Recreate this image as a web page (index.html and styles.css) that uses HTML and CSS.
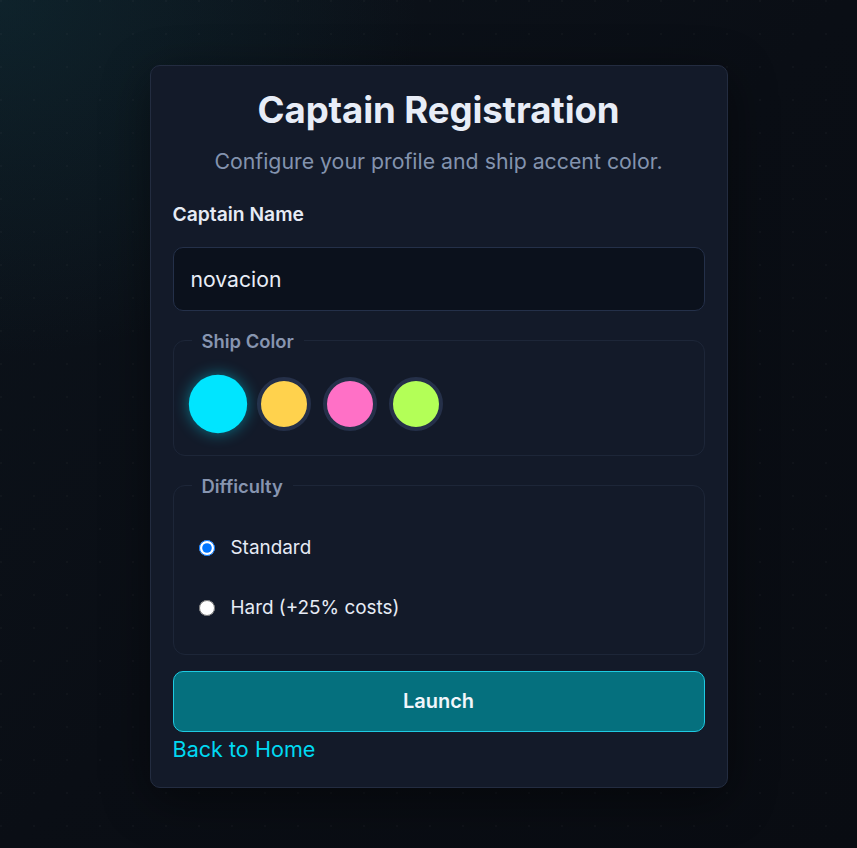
FILE: index.html
```html
<!DOCTYPE html>
<html lang="en">
<head>
<meta charset="utf-8">
<title>Captain Registration</title>
<link rel="stylesheet" href="styles.css">
</head>
<body>
<main class="page">
  <form class="card">
    <h1 class="title">Captain Registration</h1>
    <p class="subtitle">Configure your profile and ship accent color.</p>

    <label class="field-label" for="captain">Captain Name</label>
    <input class="text-input" id="captain" type="text" value="novacion">

    <fieldset class="group group-color">
      <legend class="legend">Ship Color</legend>
      <div class="swatches">
        <button type="button" class="swatch swatch-cyan is-selected" aria-label="Cyan"></button>
        <button type="button" class="swatch swatch-yellow" aria-label="Yellow"></button>
        <button type="button" class="swatch swatch-pink" aria-label="Pink"></button>
        <button type="button" class="swatch swatch-lime" aria-label="Lime"></button>
      </div>
    </fieldset>

    <fieldset class="group group-difficulty">
      <legend class="legend">Difficulty</legend>
      <div class="options">
        <label class="option"><input type="radio" name="difficulty" class="radio" checked> <span>Standard</span></label>
        <label class="option"><input type="radio" name="difficulty" class="radio"> <span>Hard (+25% costs)</span></label>
      </div>
    </fieldset>

    <button type="button" class="launch">Launch</button>
    <a class="back" href="#">Back to Home</a>
  </form>
</main>
</body>
</html>
```
FILE: styles.css
```css
* { box-sizing: border-box; }

html, body { height: 100%; }

body {
  margin: 0;
  font-family: Inter, "Noto Sans", sans-serif;
  color: #e6ebf5;
  background-color: #0a0e15;
  background-image:
    radial-gradient(circle at 1px 1px, rgba(255,255,255,0.025) 1px, transparent 1.5px),
    radial-gradient(ellipse 70% 60% at 0% 0%, rgba(20,70,80,0.3), transparent 70%),
    linear-gradient(135deg, #0c131b 0%, #0a0e15 50%, #090c12 100%);
  background-size: 33px 33px, 100% 100%, 100% 100%;
}

.page {
  display: flex;
  justify-content: center;
  padding: 65px 0 0 20px;
}

.card {
  width: 578px;
  background: #131a29;
  border: 1px solid #232c40;
  border-radius: 10px;
  padding: 23px 22px 22px 22px;
  display: flex;
  flex-direction: column;
  box-shadow: 0 12px 48px rgba(0,0,0,0.45);
}

.title {
  margin: 0;
  font-size: 36.6px;
  line-height: 1.2;
  font-weight: 700;
  letter-spacing: -0.1px;
  text-align: center;
  color: #e8edf7;
}

.subtitle {
  margin: 13px 0 0;
  font-size: 21.3px;
  line-height: 1.5;
  text-align: center;
  color: #8393ae;
}

.field-label {
  margin-top: 23px;
  font-size: 19.3px;
  line-height: 1.4;
  font-weight: 600;
  color: #e6ebf5;
}

.text-input {
  margin-top: 19px;
  height: 64px;
  width: 100%;
  padding: 0 17px;
  background: #0b111c;
  border: 1px solid #243049;
  border-radius: 10px;
  color: #e8edf7;
  font-family: inherit;
  font-size: 21.2px;
  outline: none;
}

.group {
  margin: 19px 0 0;
  padding: 25px 17px 24px;
  border: 1px solid #1d2638;
  border-radius: 12px;
  min-width: 0;
}

.legend {
  padding: 0 10px;
  margin-left: 1px;
  font-size: 18.4px;
  line-height: 22px;
  font-weight: 600;
  color: #8795b0;
}

.swatches {
  display: flex;
  gap: 12px;
}

.swatch {
  width: 54px;
  height: 54px;
  padding: 0;
  border-radius: 50%;
  border: 4px solid #253049;
  cursor: pointer;
}

.swatch-cyan { background: #00e5ff; }
.swatch-yellow { background: #ffd24d; }
.swatch-pink { background: #ff70c6; }
.swatch-lime { background: #b3ff57; }

.swatch.is-selected {
  border-color: #00e5ff;
  transform: scale(1.08);
  box-shadow: 0 0 14px rgba(0, 229, 255, 0.45);
}

.group-difficulty {
  padding-top: 29px;
  padding-bottom: 24px;
}

.options {
  display: flex;
  flex-direction: column;
  gap: 16px;
}

.option {
  display: flex;
  align-items: center;
  gap: 16px;
  min-height: 44px;
  padding-left: 8px;
  font-size: 18.9px;
  color: #e6ebf5;
  cursor: pointer;
}

.radio {
  width: 16px;
  height: 16px;
  margin: 0;
  flex: none;
}

.launch {
  margin-top: 16px;
  height: 61px;
  width: 100%;
  background: #05707e;
  border: 1px solid #1ecbe2;
  border-radius: 10px;
  color: #f2f6fb;
  font-family: inherit;
  font-size: 20px;
  font-weight: 600;
  cursor: pointer;
}

.back {
  align-self: flex-start;
  margin-top: 1px;
  font-size: 21.6px;
  line-height: 1.5;
  color: #00d9f2;
  text-decoration: none;
}
```
